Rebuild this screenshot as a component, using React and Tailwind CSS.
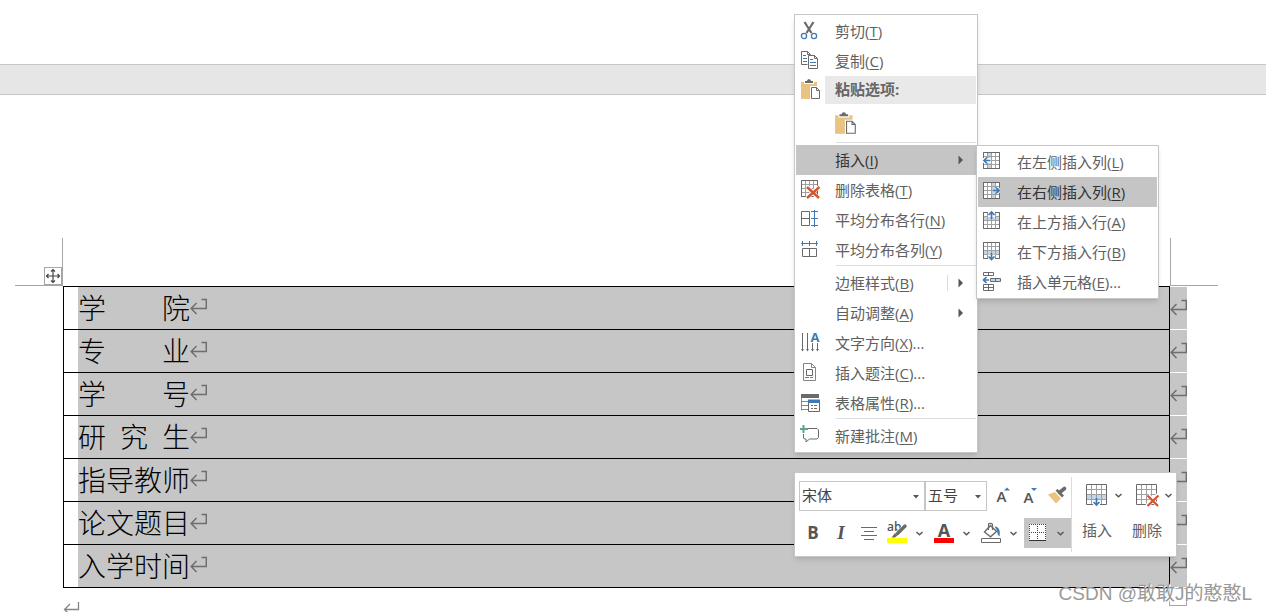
import { useState } from 'react';

const gray = '#6a6a6a';
const blue = '#3f7ab5';
const pale = '#c3d5e8';
const red = '#d9532c';

const rows = [
  ['学', '院'],
  ['专', '业'],
  ['学', '号'],
  ['研', '究', '生'],
  ['指', '导', '教', '师'],
  ['论', '文', '题', '目'],
  ['入', '学', '时', '间'],
];

const Icon = ({ children, className = 'size-[22px]' }) => (
  <svg viewBox="0 0 22 22" className={className + ' shrink-0 overflow-visible'} fill="none" stroke={gray} aria-hidden="true">
    {children}
  </svg>
);

// paragraph mark
const Mark = () => (
  <svg width="17" height="18" viewBox="0 0 17 18" className="shrink-0" fill="none" stroke="#6e6e6e" strokeWidth="1.5" aria-hidden="true">
    <path d="M6.5 5 L1.2 10.5 L6.5 16 M1.2 10.5 H16.3 V1.5 H11.5" />
  </svg>
);

const Scissors = () => (
  <Icon>
    <path d="M4.5 2 L11.5 13 M13.5 2 L6.5 13" strokeWidth="2.2" />
    <circle cx="4" cy="16" r="2.6" stroke={blue} strokeWidth="1.3" />
    <circle cx="14" cy="16" r="2.6" stroke={blue} strokeWidth="1.3" />
  </Icon>
);

const Copy = () => (
  <Icon>
    <path d="M7.5 14.5 H1.5 V1.5 H7.5 L10.5 4.5 V5 M7.5 1.5 V4.5 H10" />
    <path d="M8.5 5.5 H14.5 L17.5 8.5 V18.5 H8.5 Z M14.5 5.5 V8.5 H17.5" fill="#fff" />
    <path d="M3 5.5 H6 M3 8.5 H7 M3 11.5 H7 M10 9.5 H13 M10 12.5 H16 M10 15.5 H16" stroke={blue} />
  </Icon>
);

const Paste = ({ className }) => (
  <Icon className={className}>
    <path d="M1 3 H17 V20 H1 Z" fill="#eac282" stroke="none" />
    <path d="M4 5 V2 H6 V0 H12 V2 H14 V5 Z" fill="#fff" stroke="none" />
    <path d="M5 4 V2 H7 C7 -0.5 11 -0.5 11 2 H13 V4 Z" fill={gray} stroke="none" />
    <path d="M10 7 H18 L21 11 V21 H10 Z" fill="#fff" stroke="none" />
    <path d="M11.5 8.5 H16.5 L19.5 11.5 V19.5 H11.5 Z M16.5 8.5 V11.5 H19.5" fill="#fff" />
  </Icon>
);

const Grid = ({ children, fill }) => (
  <>
    <path d="M1.5 1.5 H17.5 V17.5 H1.5 Z" fill="#fff" />
    {fill && <path d={fill} fill={pale} stroke="none" />}
    <path d="M5.5 2 V17 M9.5 2 V17 M13.5 2 V17 M2 5.5 H17 M2 9.5 H17 M2 13.5 H17" stroke="#a0a0a0" />
    <path d="M1.5 1.5 H17.5 V17.5 H1.5 Z" />
    {children}
  </>
);

const DeleteTable = () => (
  <Icon>
    <Grid>
      <path d="M7.5 8 L18 19 M18.5 8 L7 19" stroke="#fff" strokeWidth="4" />
      <path d="M7 8 L19 19 M19.5 8 L7 19" stroke={red} strokeWidth="2.4" />
    </Grid>
  </Icon>
);

const EvenRows = () => (
  <Icon>
    <path d="M1.5 2.5 H9.5 V16.5 H1.5 Z M1.5 9.5 H9.5" />
    <path d="M14.5 1 V18 M11 2.5 H18 M11 9.5 H18 M11 16.5 H18" stroke={blue} />
  </Icon>
);

const EvenCols = () => (
  <Icon>
    <path d="M2.5 9.5 H16.5 V17.5 H2.5 Z M9.5 9.5 V17.5" />
    <path d="M1 4.5 H18 M2.5 2 V7 M9.5 2 V7 M16.5 2 V7" stroke={blue} />
  </Icon>
);

const TextDirection = () => (
  <Icon>
    <path d="M2.5 1 V19 M7.5 1 V19 M12.5 11 V19 M17.5 11 V19" />
    <path d="M1 17 H4 L2.5 19.5 Z M6 17 H9 L7.5 19.5 Z M11 17 H14 L12.5 19.5 Z M16 17 H19 L17.5 19.5 Z" fill={gray} stroke="none" />
    <text x="15" y="10" textAnchor="middle" fontSize="13" fontWeight="700" fontFamily="Open Sans, sans-serif" fill={blue} stroke="none">A</text>
  </Icon>
);

const Caption = () => (
  <Icon>
    <path d="M3.5 1.5 H11.5 L15.5 5.5 V18.5 H3.5 Z M11.5 1.5 V5.5 H15.5" stroke="#858585" />
    <path d="M6.5 7.5 H12.5 V13.5 H6.5 Z" />
    <path d="M5 15.5 H9 M10 15.5 H13" stroke={red} />
  </Icon>
);

const TableProps = () => (
  <Icon>
    <path d="M1 2 H19 V6 H1 Z" fill={gray} stroke="none" />
    <path d="M1.5 6 V18.5 M1 9.5 H8 M1 13.5 H8 M1 17.5 H8" stroke="#8a8a8a" />
    <path d="M8.5 8.5 H19.5 V19.5 H8.5 Z" fill="#fff" />
    <path d="M8 7.5 H20 V11 H8 Z" fill={blue} stroke="none" />
    <path d="M11 13.5 H13 M14 13.5 H17 M11 16.5 H13 M14 16.5 H17" />
  </Icon>
);

const NewComment = () => (
  <Icon>
    <path d="M8 3.5 H17 L18.5 5 V12.5 L17 14 H9.5 L6 17 V14 H4.5 L3.5 13 V9" />
    <path d="M3.5 0 V8 M0 4 H8" stroke="#5ba58a" strokeWidth="2" />
  </Icon>
);

const ColLeft = () => (
  <Icon>
    <Grid fill="M5 2 H9.5 V17 H5 Z">
      <path d="M1 7 H9 V12 H1 Z" fill="#fff" stroke="none" />
      <path d="M8.5 9.5 H2 M5 6.5 L2 9.5 L5 12.5" stroke={blue} strokeWidth="1.7" />
    </Grid>
  </Icon>
);

const ColRight = () => (
  <Icon>
    <Grid fill="M9.5 2 H14 V17 H9.5 Z">
      <path d="M11 7 H18 V12 H11 Z" fill={pale} stroke="none" />
      <path d="M11 9.5 H17 M14 6.5 L17 9.5 L14 12.5" stroke={blue} strokeWidth="1.7" />
    </Grid>
  </Icon>
);

const RowAbove = () => (
  <Icon>
    <Grid fill="M2 5.5 H17 V9.5 H2 Z">
      <path d="M6 0 H13 V6 H6 Z" fill="#fff" stroke="none" />
      <path d="M9.5 8 V1.5 M6.5 4 L9.5 1 L12.5 4" stroke={blue} strokeWidth="1.7" />
    </Grid>
  </Icon>
);

const RowBelow = () => (
  <Icon>
    <Grid fill="M2 9.5 H17 V13.5 H2 Z">
      <path d="M6 13.5 H13 V20 H6 Z" fill="#fff" stroke="none" />
      <path d="M9.5 12 V18.5 M6.5 15.5 L9.5 18.5 L12.5 15.5" stroke={blue} strokeWidth="1.7" />
    </Grid>
  </Icon>
);

const InsertCell = () => (
  <Icon>
    <path d="M1.5 1.5 H11.5 V4.5 H1.5 Z M6.5 1.5 V4.5 M1.5 13.5 H11.5 V19.5 H1.5 Z M6.5 13.5 V19.5 M1.5 16.5 H11.5" />
    <path d="M8.5 7.5 H18.5 V10.5 H8.5 Z M13.5 7.5 V10.5" fill={pale} />
    <path d="M7 9 H2 M4.5 6 L1.5 9 L4.5 12" stroke={blue} strokeWidth="1.7" />
  </Icon>
);

const BigGrid = ({ remove }) => (
  <Icon>
    {!remove && <path d="M1 11 H21 V16 H1 Z" fill={pale} stroke="none" />}
    <path d="M5.5 1 V20 M10.5 1 V20 M15.5 1 V20 M1 5.5 H20 M1 10.5 H20 M1 15.5 H20" stroke="#a0a0a0" />
    <path d="M0.5 0.5 H20.5 V20.5 H0.5 Z" />
    {remove ? (
      <>
        <path d="M12 11 L22 22 M22 11 L11 22" stroke="#fff" strokeWidth="4" />
        <path d="M11.5 11.5 L22 22 M22.5 11.5 L11.5 22" stroke={red} strokeWidth="2.3" />
      </>
    ) : (
      <>
        <path d="M7 16 H14 V22 H7 Z" fill="#fff" stroke="none" />
        <path d="M10.5 14 V21 M7.5 18 L10.5 21 L13.5 18" stroke={blue} strokeWidth="1.7" />
      </>
    )}
  </Icon>
);

const Chevron = () => (
  <svg width="7" height="5" viewBox="0 0 7 5" fill="none" stroke="#555" strokeWidth="1.4" aria-hidden="true">
    <path d="M0.5 1 L3.5 3.8 L6.5 1" />
  </svg>
);

const Submark = () => (
  <svg width="6" height="10" viewBox="0 0 6 10" fill="#555" aria-hidden="true">
    <path d="M0.5 0.5 L5 5 L0.5 9.5 Z" />
  </svg>
);

const Item = ({ icon, label, k, more, sub, split, active, onClick }) => (
  <button
    type="button"
    role="menuitem"
    onClick={onClick}
    className={'flex h-[30px] w-full items-center pl-1 pr-3 text-left ' + (active ? 'bg-[#c5c5c5] text-[#333]' : 'text-[#606060] hover:bg-[#e5e5e5]')}
  >
    <span className="flex w-[35px] shrink-0">{icon}</span>
    <span className="flex-1 whitespace-nowrap">
      {label}(<u className="underline-offset-2">{k}</u>){more && '...'}
    </span>
    {split && <span className="mr-[10px] h-4 w-px bg-[#dcdcdc]" />}
    {sub && <Submark />}
  </button>
);

const Separator = () => <div role="separator" className="ml-10 h-[3px] border-t border-[#dcdfe2]" />;

const Tool = ({ label, children }) => (
  <button type="button" aria-label={label} className="flex w-7 items-center justify-center hover:bg-gray-200">
    {children}
  </button>
);

const SplitTool = ({ label, active, children }) => (
  <button type="button" aria-label={label} className={'flex w-[47px] items-center gap-2 pl-[3px] ' + (active ? 'bg-[#c5c5c5]' : 'hover:bg-gray-200')}>
    <svg width="22" height="24" viewBox="0 0 22 24" className="overflow-visible" fill="none" stroke={gray} aria-hidden="true">
      {children}
    </svg>
    <Chevron />
  </button>
);

const Pick = ({ label, value, options, onChange, className }) => (
  <div className={'relative ' + className}>
    <select
      aria-label={label}
      value={value}
      onChange={(e) => onChange(e.target.value)}
      className="h-full w-full appearance-none border border-[#c6c6c6] bg-white pb-[3px] pl-[2px] text-[15px] leading-5 text-[#444] outline-none"
    >
      {options.map((o) => <option key={o}>{o}</option>)}
    </select>
    <svg width="6" height="4" viewBox="0 0 6 4" fill="#555" className="pointer-events-none absolute right-[6px] top-[14px]" aria-hidden="true">
      <path d="M0 0 H6 L3 3.5 Z" />
    </svg>
  </div>
);

const ContextMenu = ({ current, setCurrent }) => (
  <div role="menu" className="absolute left-[794px] top-[14px] w-[184px] border border-[#c6c6c6] bg-white px-px py-px text-[15px] leading-5 shadow-md">
    <Item icon={<Scissors />} label="剪切" k="T" />
    <Item icon={<Copy />} label="复制" k="C" />
    <div className="flex h-7 items-center pl-1">
      <Paste className="size-[22px]" />
      <span className="ml-[3px] flex h-full flex-1 items-center bg-[#e9e9e9] pb-[2px] pl-[10px] font-bold text-[#666]">粘贴选项:</span>
    </div>
    <div className="flex h-[38px] items-center pl-[38px] pt-[2px]">
      <button type="button" aria-label="保留源格式">
        <Paste className="size-6" />
      </button>
    </div>
    <Separator />
    <Item label="插入" k="I" sub active />
    <Item icon={<DeleteTable />} label="删除表格" k="T" />
    <Item icon={<EvenRows />} label="平均分布各行" k="N" />
    <Item icon={<EvenCols />} label="平均分布各列" k="Y" />
    <Separator />
    <Item label="边框样式" k="B" sub split />
    <Item label="自动调整" k="A" sub />
    <Item icon={<TextDirection />} label="文字方向" k="X" more />
    <Item icon={<Caption />} label="插入题注" k="C" more />
    <Item icon={<TableProps />} label="表格属性" k="R" more />
    <Separator />
    <Item icon={<NewComment />} label="新建批注" k="M" />

    <div role="menu" className="absolute left-[181px] top-[130px] w-[183px] border border-[#c6c6c6] bg-white p-px shadow-md">
      <Item icon={<ColLeft />} label="在左侧插入列" k="L" active={current === 'L'} onClick={() => setCurrent('L')} />
      <Item icon={<ColRight />} label="在右侧插入列" k="R" active={current === 'R'} onClick={() => setCurrent('R')} />
      <Item icon={<RowAbove />} label="在上方插入行" k="A" active={current === 'A'} onClick={() => setCurrent('A')} />
      <Item icon={<RowBelow />} label="在下方插入行" k="B" active={current === 'B'} onClick={() => setCurrent('B')} />
      <Item icon={<InsertCell />} label="插入单元格" k="E" more active={current === 'E'} onClick={() => setCurrent('E')} />
    </div>
  </div>
);

const MiniToolbar = () => {
  const [font, setFont] = useState('宋体');
  const [size, setSize] = useState('五号');
  return (
    <div role="toolbar" className="absolute left-[794px] top-[472px] flex w-[383px] border border-[#c6c6c6] bg-white py-1 shadow-md">
      <div className="flex flex-col gap-[7px] pb-1 pl-1 pt-1">
        <div className="flex h-[30px]">
          <Pick label="字体" value={font} options={['宋体', '黑体']} onChange={setFont} className="w-[126px]" />
          <Pick label="字号" value={size} options={['五号', '四号']} onChange={setSize} className="w-[62px]" />
          <Tool label="增大字号">
            <Icon>
              <text x="11.5" y="17" textAnchor="middle" fontSize="15" fontWeight="600" fontFamily="Open Sans, sans-serif" fill="#555" stroke="none">A</text>
              <path d="M14 5.5 L17 2.5 L20 5.5 Z" fill={blue} stroke="none" />
            </Icon>
          </Tool>
          <Tool label="减小字号">
            <Icon>
              <text x="10.5" y="18" textAnchor="middle" fontSize="15" fontWeight="600" fontFamily="Open Sans, sans-serif" fill="#555" stroke="none">A</text>
              <path d="M13 3 L16 6 L19 3 Z" fill={blue} stroke="none" />
            </Icon>
          </Tool>
          <Tool label="格式刷">
            <Icon>
              <path d="M2 9.5 L9 7 L15 13.5 L10 18.5 Z" fill="#eac282" stroke="none" />
              <path d="M9.5 5.5 L11.5 4 L18 10.5 L16 12.5 Z" fill={gray} stroke="none" />
              <path d="M13.5 7.5 L18.5 3.5" strokeWidth="3.6" strokeLinecap="round" />
            </Icon>
          </Tool>
        </div>
        <div className="flex h-[30px] text-[17px] leading-5 text-[#555]">
          <Tool label="加粗"><b>B</b></Tool>
          <Tool label="倾斜"><i className="font-['Liberation_Serif'] text-[19px] font-bold">I</i></Tool>
          <Tool label="居中">
            <Icon>
              <path d="M3 5.5 H19 M6 9.5 H16 M3 13.5 H19 M6 17.5 H16" />
            </Icon>
          </Tool>
          <SplitTool label="突出显示">
            <path d="M1 17 H21 V22 H1 Z" fill="#ff0" stroke="none" />
            <text x="1" y="10" fontSize="12" fontWeight="600" fontFamily="Open Sans, sans-serif" fill="#555" stroke="none">ab</text>
            <path d="M19.5 5 L11 13.5" stroke="#fff" strokeWidth="5" />
            <path d="M19 5 L11.5 12.5" strokeWidth="3.4" strokeLinecap="round" />
            <path d="M5.5 16.5 L9 12 L11.5 14.5 L9 16.5 Z" fill={gray} stroke="none" />
          </SplitTool>
          <SplitTool label="字体颜色">
            <path d="M1 17 H21 V22 H1 Z" fill="#f00" stroke="none" />
            <text x="11" y="16" textAnchor="middle" fontSize="18" fontWeight="700" fontFamily="Open Sans, sans-serif" fill="#555" stroke="none">A</text>
          </SplitTool>
          <SplitTool label="底纹">
            <path d="M1.5 17.5 H20.5 V21.5 H1.5 Z" />
            <path d="M10.5 4.5 L16.5 10.5 L10.5 15.8 L4.5 11 Z" strokeWidth="1.4" />
            <path d="M8.5 9 V3.5 C8.5 2 12.5 2 12.5 3.5 V9" strokeWidth="1.2" />
            <path d="M14.5 5.5 C19 6 20.5 9 19.5 15.5 C17.5 14 17 11 17 9.5 Z" fill={blue} stroke="none" />
          </SplitTool>
          <SplitTool label="边框" active>
            <path d="M2 3 H19 V20 H2 Z" fill="#fff" stroke="none" />
            <path d="M2 3.5 H19 M2.5 5 V19 M18.5 5 V19 M10.5 5 V19 M4 11.5 H18" strokeDasharray="1 1" stroke="#444" />
            <path d="M2 19.5 H19" stroke="#333" />
          </SplitTool>
        </div>
      </div>
      <div className="flex flex-1 border-l border-[#dcdcdc] text-[15px] leading-5 text-[#606060]">
        {['插入', '删除'].map((t) => (
          <button key={t} type="button" className="flex w-[50px] flex-col gap-[14px] pt-[7px] text-left hover:bg-gray-100">
            <span className="flex items-center gap-[7px] pl-[14px]">
              <BigGrid remove={t === '删除'} />
              <Chevron />
            </span>
            <span className="pl-[10px]">{t}</span>
          </button>
        ))}
      </div>
    </div>
  );
};

const App = () => {
  const [current, setCurrent] = useState('R');
  return (
    <div className="relative h-screen overflow-hidden bg-white font-['Open_Sans','Noto_Sans_CJK_SC',sans-serif]">
      <div className="mt-16 h-[31px] border-y border-[#c6c6c6] bg-[#e6e6e6]" />
      <main className="pt-[143px]">
        {/* page corner marks */}
        <div className="flex justify-between px-12">
          <div className="-ml-[33px] flex size-12 items-end justify-end border-b border-r border-[#a6a6a6]">
            <button type="button" aria-label="选择表格" className="size-[18px] border border-[#a6a6a6]">
              <svg viewBox="0 0 16 16" fill="none" stroke="#444" strokeWidth="1.2" aria-hidden="true">
                <path d="M8 2 V14 M2 8 H14 M6 3.5 L8 1.5 L10 3.5 M6 12.5 L8 14.5 L10 12.5 M3.5 6 L1.5 8 L3.5 10 M12.5 6 L14.5 8 L12.5 10" />
              </svg>
            </button>
          </div>
          <div className="size-12 border-b border-l border-[#a6a6a6]" />
        </div>
        <div className="pl-[63px] pr-[79px]">
          <table className="w-full border-separate border-spacing-0">
            <tbody>
              {rows.map((chars, i) => (
                <tr key={i}>
                  <td className={'border-x border-b border-black p-0 pl-[14px] ' + (i === 0 ? 'border-t' : '')}>
                    <div className="flex h-[42px] items-center bg-[#c6c6c6] pb-[2px]">
                      <span className="flex w-28 justify-between font-['Noto_Sans_CJK_SC',sans-serif] text-[28px] font-light leading-10 text-black">
                        {chars.map((c, j) => <span key={j}>{c}</span>)}
                      </span>
                      <Mark />
                    </div>
                  </td>
                  <td className={'w-[17px] border-b border-white bg-[#c6c6c6] p-0 ' + (i === 0 ? 'border-t' : '')}>
                    <Mark />
                  </td>
                </tr>
              ))}
            </tbody>
          </table>
          <div className="flex items-start justify-between">
            <svg width="17" height="24" viewBox="0 0 17 24" fill="none" stroke="#858585" strokeWidth="1.3" aria-hidden="true">
              <path d="M7 16 L1.5 21.5 L7 27 M1.5 21.5 H15.5 V14" />
            </svg>
            <span className="size-[18px] border border-[#a6a6a6]" />
          </div>
        </div>
      </main>
      <ContextMenu current={current} setCurrent={setCurrent} />
      <MiniToolbar />
      <div className="absolute bottom-[3px] right-[14px] whitespace-nowrap font-['Liberation_Sans','Noto_Sans_CJK_SC',sans-serif] text-[19px] leading-8 text-[#999] [text-shadow:1px_1px_0_#fff]">
        CSDN @敢敢J的憨憨L
      </div>
    </div>
  );
};

export default App;
